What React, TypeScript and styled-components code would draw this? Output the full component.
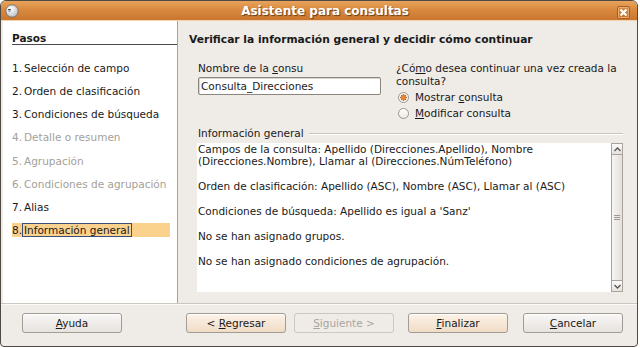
import React from "react";
import styled, { createGlobalStyle } from "styled-components";

const GlobalStyle = createGlobalStyle`
  body {
    margin: 0;
    background: #ffffff;
    font-family: "DejaVu Sans", "Liberation Sans", sans-serif;
  }
`;

type Step = { n: number; label: string; disabled?: boolean; active?: boolean };

const steps: Step[] = [
  { n: 1, label: "Selección de campo" },
  { n: 2, label: "Orden de clasificación" },
  { n: 3, label: "Condiciones de búsqueda" },
  { n: 4, label: "Detalle o resumen", disabled: true },
  { n: 5, label: "Agrupación", disabled: true },
  { n: 6, label: "Condiciones de agrupación", disabled: true },
  { n: 7, label: "Alias" },
  { n: 8, label: "Información general", active: true },
];

const summary = [
  "Campos de la consulta: Apellido (Direcciones.Apellido), Nombre",
  "(Direcciones.Nombre), Llamar al (Direcciones.NúmTeléfono)",
  "",
  "Orden de clasificación: Apellido (ASC), Nombre (ASC), Llamar al (ASC)",
  "",
  "Condiciones de búsqueda: Apellido es igual a 'Sanz'",
  "",
  "No se han asignado grupos.",
  "",
  "No se han asignado condiciones de agrupación.",
];

export default function App() {
  return (
    <>
      <GlobalStyle />
      <Window>
        <TitleBar>
          <AppIcon width="14" height="14" viewBox="0 0 14 14">
            <defs>
              <radialGradient id="ig" cx="0.4" cy="0.35" r="0.7">
                <stop offset="0" stopColor="#ffffff" />
                <stop offset="1" stopColor="#b9c0c8" />
              </radialGradient>
            </defs>
            <circle cx="7" cy="7" r="6.2" fill="url(#ig)" stroke="#6d645c" strokeWidth="0.8" />
            <path d="M3 5.5h3M3.5 7h2" stroke="#3a3a3a" strokeWidth="0.9" />
          </AppIcon>
          <Title>Asistente para consultas</Title>
          <CloseButton>
            <svg width="9" height="9" viewBox="0 0 9 9">
              <path d="M1.5 1.5l6 6M7.5 1.5l-6 6" stroke="#ffffff" strokeWidth="2.2" />
            </svg>
          </CloseButton>
        </TitleBar>

        <Main>
          <StepsPanel>
            <StepsHeader>Pasos</StepsHeader>
            <StepList>
              {steps.map((s) => (
                <StepItem key={s.n} $disabled={s.disabled} $active={s.active}>
                  <StepNum>{s.n}.</StepNum>
                  <StepLabel $active={s.active}>{s.label}</StepLabel>
                </StepItem>
              ))}
            </StepList>
          </StepsPanel>

          <Content>
            <PageTitle>Verificar la información general y decidir cómo continuar</PageTitle>
            <FormRow>
              <NameColumn>
                <FieldLabel>
                  Nombre de la <Key>c</Key>onsu
                </FieldLabel>
                <TextInput>Consulta_Direcciones</TextInput>
              </NameColumn>
              <ChoiceColumn>
                <FieldLabel>
                  ¿Có<Key>m</Key>o desea continuar una vez creada la consulta?
                </FieldLabel>
                <RadioGroup>
                  <RadioRow>
                    <Radio $checked />
                    <span>
                      Mostrar <Key>c</Key>onsulta
                    </span>
                  </RadioRow>
                  <RadioRow>
                    <Radio />
                    <span>
                      <Key>M</Key>odificar consulta
                    </span>
                  </RadioRow>
                </RadioGroup>
              </ChoiceColumn>
            </FormRow>

            <FrameHeader>
              <span>Información general</span>
              <FrameLine />
            </FrameHeader>
            <SummaryBox>
              <SummaryText>
                {summary.map((line, i) => (
                  <SummaryLine key={i}>{line || "\u00a0"}</SummaryLine>
                ))}
              </SummaryText>
              <ScrollBar>
                <ScrollArrow>
                  <svg width="7" height="5" viewBox="0 0 7 5">
                    <path d="M0.5 4L3.5 1L6.5 4" fill="none" stroke="#555" strokeWidth="1.3" />
                  </svg>
                </ScrollArrow>
                <ScrollThumb>
                  <Grip />
                </ScrollThumb>
                <ScrollArrow>
                  <svg width="7" height="5" viewBox="0 0 7 5">
                    <path d="M0.5 1L3.5 4L6.5 1" fill="none" stroke="#555" strokeWidth="1.3" />
                  </svg>
                </ScrollArrow>
              </ScrollBar>
            </SummaryBox>
          </Content>
        </Main>

        <Footer>
          <Button $width={100}>
            <span>
              <Key>A</Key>yuda
            </span>
          </Button>
          <Spacer />
          <Button $width={100} $tone="warm">
            <span>
              &lt; <Key>R</Key>egresar
            </span>
          </Button>
          <Button $width={100} $space={8} $tone="disabled">
            <span>
              <Key>S</Key>iguiente &gt;
            </span>
          </Button>
          <Button $width={100} $space={14} $tone="warm">
            <span>
              <Key>F</Key>inalizar
            </span>
          </Button>
          <Button $width={100} $space={15}>
            <span>
              <Key>C</Key>ancelar
            </span>
          </Button>
        </Footer>
      </Window>
    </>
  );
}

const Window = styled.div`
  width: 638px;
  height: 347px;
  box-sizing: border-box;
  border: 1px solid #4f4943;
  border-radius: 6px 6px 4px 4px;
  overflow: hidden;
  background: #efebe7;
  display: flex;
  flex-direction: column;
  font-size: 10.5px;
  color: #1a1a1a;
`;

const Key = styled.span`
  text-decoration: underline;
`;

const TitleBar = styled.div`
  height: 19px;
  flex: none;
  display: flex;
  align-items: center;
  padding: 0 3px 0 4px;
  background: linear-gradient(#e7a35d, #d98a3f 45%, #c9762f);
  border-bottom: 1px solid #f3d2ad;
`;

const AppIcon = styled.svg`
  flex: none;
`;

const Title = styled.div`
  flex: 1;
  text-align: center;
  color: #ffffff;
  font-weight: bold;
  font-size: 12px;
  text-shadow: 1px 1px 1px #6b3c12;
  padding-left: 14px;
`;

const CloseButton = styled.div`
  width: 13px;
  height: 13px;
  box-sizing: border-box;
  border: 1px solid #a85f22;
  border-radius: 2px;
  background: linear-gradient(#d88b44, #c9742c);
  box-shadow: inset 0 0 0 1px #e9ab70;
  display: flex;
  align-items: center;
  justify-content: center;
  margin-top: 3px;
  margin-right: 4px;
`;

const Main = styled.div`
  height: 282px;
  flex: none;
  display: flex;
`;

const StepsPanel = styled.div`
  width: 175px;
  margin-left: 2px;
  box-sizing: border-box;
  background: #ffffff;
  border-right: 1px solid #a8a29c;
  padding-left: 9px;
`;

const StepsHeader = styled.div`
  margin-top: 11px;
  height: 12px;
  line-height: 12px;
  font-weight: bold;
  border-bottom: 1px solid #4a4a4a;
`;

const StepList = styled.div`
  margin-top: 16px;
  margin-right: 7px;
  display: flex;
  flex-direction: column;
  gap: 9.15px;
`;

const StepItem = styled.div<{ $disabled?: boolean; $active?: boolean }>`
  height: 14px;
  line-height: 14px;
  display: flex;
  white-space: nowrap;
  color: ${(p) => (p.$disabled ? "#a39f9a" : "#1a1a1a")};
  background: ${(p) => (p.$active ? "#fad18d" : "transparent")};
`;

const StepNum = styled.span`
  width: 10px;
`;

const StepLabel = styled.span<{ $active?: boolean }>`
  box-sizing: border-box;
  padding: 0 1px;
  border: 1px solid ${(p) => (p.$active ? "#3b4f7a" : "transparent")};
  line-height: 12px;
`;

const Content = styled.div`
  flex: 1;
  padding: 12px 14px 0 11px;
  display: flex;
  flex-direction: column;
`;

const PageTitle = styled.div`
  font-weight: bold;
  font-size: 10.7px;
  line-height: 13px;
`;

const FormRow = styled.div`
  display: flex;
  gap: 15px;
  margin-top: 16px;
  padding-left: 9px;
`;

const NameColumn = styled.div`
  width: 183px;
  display: flex;
  flex-direction: column;
`;

const ChoiceColumn = styled.div`
  flex: 1;
  display: flex;
  flex-direction: column;
`;

const FieldLabel = styled.div`
  line-height: 13px;
`;

const TextInput = styled.div`
  margin-top: 2px;
  height: 18px;
  box-sizing: border-box;
  border: 1px solid #8a857f;
  border-radius: 2px;
  background: #ffffff;
  padding-left: 2px;
  line-height: 16px;
  box-shadow: inset 1px 1px 0 #d8d4cf;
`;

const RadioGroup = styled.div`
  margin-top: 1px;
  display: flex;
  flex-direction: column;
`;

const RadioRow = styled.div`
  display: flex;
  align-items: center;
  gap: 6px;
  height: 16px;
  padding-left: 2px;
`;

const Radio = styled.span<{ $checked?: boolean }>`
  width: 11px;
  height: 11px;
  box-sizing: border-box;
  border-radius: 50%;
  border: 1px solid #9a948d;
  background: ${(p) =>
    p.$checked
      ? "radial-gradient(circle, #e0873a 0 2.5px, #b8621c 2.6px 3px, #fbf8f5 3.2px)"
      : "linear-gradient(#ffffff, #ece8e4)"};
`;

const FrameHeader = styled.div`
  margin-top: 6px;
  padding-left: 9px;
  display: flex;
  align-items: center;
  gap: 5px;
  line-height: 13px;
`;

const FrameLine = styled.div`
  flex: 1;
  height: 0;
  border-top: 1px solid #c9c4be;
  border-bottom: 1px solid #ffffff;
`;

const SummaryBox = styled.div`
  margin: 3px 0 0 8px;
  height: 149px;
  background: #ffffff;
  display: flex;
`;

const SummaryText = styled.div`
  flex: 1;
  padding-left: 1px;
`;

const SummaryLine = styled.div`
  line-height: 12.4px;
  white-space: nowrap;
`;

const ScrollBar = styled.div`
  width: 12px;
  display: flex;
  flex-direction: column;
  background: #e4e0dc;
`;

const ScrollArrow = styled.div`
  height: 12px;
  box-sizing: border-box;
  border: 1px solid #a9a39d;
  background: linear-gradient(#fbfaf9, #e6e2de);
  display: flex;
  align-items: center;
  justify-content: center;
`;

const ScrollThumb = styled.div`
  flex: 1;
  box-sizing: border-box;
  border: 1px solid #a9a39d;
  border-top: none;
  border-bottom: none;
  background: linear-gradient(90deg, #f7f5f3, #e3dfdb);
  display: flex;
  align-items: center;
  justify-content: center;
`;

const Grip = styled.div`
  width: 6px;
  height: 5px;
  background: repeating-linear-gradient(#9d9790 0 1px, transparent 1px 2px);
`;

const Footer = styled.div`
  flex: 1;
  border-top: 1px solid #cbc6c0;
  box-shadow: inset 0 1px 0 #fbfaf9;
  display: flex;
  align-items: flex-start;
  padding: 9px 14px 0 21px;
`;

const Spacer = styled.div`
  flex: 1;
`;

const Button = styled.div<{ $width: number; $space?: number; $tone?: "warm" | "disabled" }>`
  width: ${(p) => p.$width}px;
  height: 20px;
  box-sizing: border-box;
  margin-left: ${(p) => p.$space ?? 0}px;
  border: 1px solid ${(p) => (p.$tone === "disabled" ? "#cdc8c2" : "#a39c95")};
  border-radius: 3px;
  display: flex;
  align-items: center;
  justify-content: center;
  color: ${(p) => (p.$tone === "disabled" ? "#aaa5a0" : "#1a1a1a")};
  background: ${(p) =>
    p.$tone === "warm"
      ? "linear-gradient(#fdf3e8, #f0dcc6)"
      : p.$tone === "disabled"
      ? "#efebe7"
      : "linear-gradient(#f9f8f7, #e6e2de)"};
  box-shadow: ${(p) => (p.$tone === "disabled" ? "none" : "inset 0 1px 0 #ffffff")};
`;
